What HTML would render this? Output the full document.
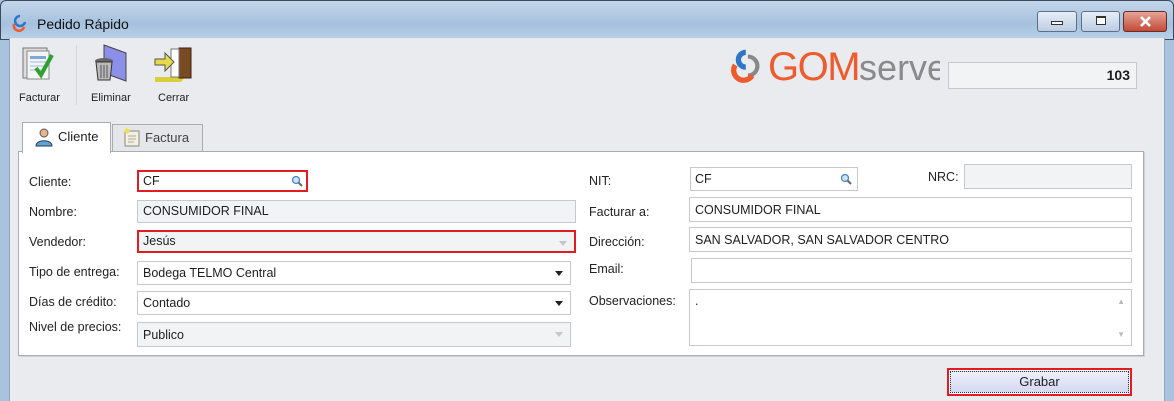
<!DOCTYPE html>
<html><head><meta charset="utf-8"><style>
*{box-sizing:border-box;margin:0;padding:0}
body{width:1174px;height:401px;overflow:hidden;font-family:"Liberation Sans",sans-serif;font-size:12px;color:#1e1e1e;background:#a9c3df;position:relative}
.a{position:absolute}
.title{left:0;top:0;width:1174px;height:40px;background:linear-gradient(#c3d6ea,#a6c1de 60%,#b9d0e8);border:1px solid #3b4a5c;border-radius:6px 6px 0 0}
.client{left:9px;top:38px;width:1156px;height:363px;background:#e9ebef;border-left:1px solid #8ea6c0;border-right:1px solid #8ea6c0}
.lbl{font-size:12.5px;color:#222}
.in{background:#fff;border:1px solid #c5c8cd;font-size:12.5px;padding:4px 5px;line-height:15px}
.ro{background:#f2f3f5}
.red{border:2px solid #e31b23}
.dd::after{content:"";position:absolute;right:7px;top:9px;border:4px solid transparent;border-top:5px solid #222}
.dd.g::after{border-top-color:#c4c6ca}
.wb{top:11px;height:21px;border:1px solid #5d6f86;border-radius:3px;background:linear-gradient(#e6eef8,#bccde2)}
.tb{font-size:11px;color:#222}
</style></head><body>
<div class="a title"></div>
<svg class="a" style="left:10px;top:13px" width="20" height="20" viewBox="0 0 20 20"><path d="M10 3a5 5 0 1 0 5 6" stroke="#2f75c5" stroke-width="2.5" fill="none"/><path d="M4 11a5 5 0 0 0 10 3" stroke="#ee5b2c" stroke-width="2.5" fill="none"/></svg>
<div class="a" style="left:37px;top:16px;font-size:14px;color:#111">Pedido Rápido</div>
<div class="a wb" style="left:1037px;width:40px"><div class="a" style="left:13px;top:9px;width:12px;height:4px;border:1px solid #333;background:#fff"></div></div>
<div class="a wb" style="left:1081px;width:39px"><div class="a" style="left:14px;top:4px;width:10px;height:9px;border:1px solid #333;border-top-width:2px;background:#fff"></div></div>
<div class="a wb" style="left:1123px;width:44px;background:linear-gradient(#e7a497,#c24a36);border-color:#6b2a22"><svg class="a" style="left:15px;top:4px" width="13" height="11" viewBox="0 0 13 11"><path d="M2 1l9 9M11 1l-9 9" stroke="#fff" stroke-width="2.6"/></svg></div>
<div class="a client"></div>
<!-- toolbar -->
<svg class="a" style="left:22px;top:46px" width="40" height="36" viewBox="0 0 40 36"><rect x="1" y="2" width="24" height="30" fill="#ddd" stroke="#777"/><rect x="5" y="5" width="22" height="28" fill="#f4f4f4" stroke="#888"/><rect x="8" y="10" width="16" height="3" fill="#7da7d8"/><path d="M8 16h16M8 20h16M8 24h16" stroke="#9bbbe0"/><path d="M14 22l5 7 11-20" stroke="#2ea02e" stroke-width="4" fill="none"/></svg>
<div class="a tb" style="left:19px;top:92px">Facturar</div>
<div class="a" style="left:76px;top:45px;width:1px;height:60px;background:#d4d7dc"></div>
<svg class="a" style="left:90px;top:43px" width="42" height="40" viewBox="0 0 42 40"><path d="M14 2l22 8v28l-22-8z" fill="#8b8fe8" stroke="#444"/><ellipse cx="14" cy="18" rx="9" ry="3" fill="#666"/><path d="M6 19l2 18h12l2-18z" fill="#bbb" stroke="#333"/><path d="M11 22v13M14 22v13M17 22v13" stroke="#555"/></svg>
<div class="a tb" style="left:91px;top:92px">Eliminar</div>
<svg class="a" style="left:153px;top:45px" width="42" height="38" viewBox="0 0 42 38"><path d="M2 32h30l-4 5H2z" fill="#d9cf3a"/><rect x="26" y="3" width="12" height="30" fill="#7a4a22" stroke="#3b220e"/><rect x="18" y="4" width="8" height="28" fill="#fff" stroke="#777"/><path d="M2 14h10v-6l9 9-9 9v-6H2z" fill="#e8d94a" stroke="#555"/></svg>
<div class="a tb" style="left:158px;top:92px">Cerrar</div>
<!-- logo -->
<svg class="a" style="left:731px;top:46px" width="38" height="38" viewBox="0 0 36 36"><path d="M14 6a7 7 0 0 0 0 14" stroke="#2f75c5" stroke-width="5" fill="none"/><path d="M16 10a9 9 0 1 1 0 18" stroke="#888" stroke-width="4" fill="none"/><path d="M4 18a9 9 0 0 0 16 10" stroke="#ee5b2c" stroke-width="5" fill="none"/></svg>
<div class="a" style="left:768px;top:42px;width:172px;overflow:hidden;white-space:nowrap;font-size:40px;letter-spacing:-1.5px;line-height:50px"><span style="color:#ee5b2c">GOM</span><span style="color:#8a8a8a;font-size:36px;letter-spacing:0">server</span></div>
<div class="a in ro" style="left:948px;top:62px;width:189px;height:27px;text-align:right;font-weight:bold;font-size:14px;padding:5px 6px">103</div>
<!-- tabs -->
<div class="a" style="left:18px;top:151px;width:1126px;height:205px;background:#fff;border:1px solid #a9acb1;box-shadow:1px 1px 0 #cfd2d6"></div>
<div class="a" style="left:22px;top:122px;width:89px;height:31px;background:#fff;border:1px solid #a9acb1;border-bottom:none"></div>
<svg class="a" style="left:35px;top:127px" width="18" height="20" viewBox="0 0 18 20"><circle cx="9" cy="6" r="4" fill="#e7b58a" stroke="#555"/><path d="M1 19c0-7 16-7 16 0z" fill="#5aa6d8" stroke="#335"/></svg>
<div class="a" style="left:58px;top:129px;font-size:13px">Cliente</div>
<div class="a" style="left:112px;top:124px;width:91px;height:27px;background:#e4e6ea;border:1px solid #a9acb1;border-bottom:none"></div>
<svg class="a" style="left:123px;top:128px" width="18" height="20" viewBox="0 0 18 20"><rect x="2" y="3" width="14" height="15" fill="#f4f0dc" stroke="#888"/><path d="M5 8h8M5 11h8M5 14h6" stroke="#aaa"/><circle cx="4" cy="3" r="2.5" fill="#f2e24a"/></svg>
<div class="a" style="left:145px;top:130px;font-size:13px;color:#444">Factura</div>
<!-- left fields -->
<div class="a lbl" style="left:29px;top:175px">Cliente:</div>
<div class="a in red" style="left:137px;top:170px;width:171px;height:22px;padding:2px 4px">CF<svg class="a" style="right:3px;top:3px" width="12" height="12" viewBox="0 0 12 12"><circle cx="5" cy="5" r="3.5" fill="#cfe3f7" stroke="#4b86c4" stroke-width="1.3"/><path d="M7.5 7.5l3.5 3.5" stroke="#666" stroke-width="2"/></svg></div>
<div class="a lbl" style="left:29px;top:205px">Nombre:</div>
<div class="a in ro" style="left:137px;top:200px;width:439px;height:23px;padding:3px 5px">CONSUMIDOR FINAL</div>
<div class="a lbl" style="left:29px;top:235px">Vendedor:</div>
<div class="a in ro red dd g" style="left:137px;top:230px;width:439px;height:23px;padding:2px 4px">Jesús</div>
<div class="a lbl" style="left:29px;top:265px">Tipo de entrega:</div>
<div class="a in dd" style="left:137px;top:261px;width:434px;height:24px">Bodega TELMO Central</div>
<div class="a lbl" style="left:29px;top:295px">Días de crédito:</div>
<div class="a in dd" style="left:137px;top:291px;width:434px;height:24px">Contado</div>
<div class="a lbl" style="left:29px;top:320px">Nivel de precios:</div>
<div class="a in ro dd g" style="left:137px;top:322px;width:434px;height:25px;padding:5px 5px">Publico</div>
<!-- right fields -->
<div class="a lbl" style="left:589px;top:174px">NIT:</div>
<div class="a in" style="left:690px;top:167px;width:168px;height:24px;padding:4px 4px">CF<svg class="a" style="right:5px;top:5px" width="12" height="12" viewBox="0 0 12 12"><circle cx="5" cy="5" r="3.5" fill="#cfe3f7" stroke="#4b86c4" stroke-width="1.3"/><path d="M7.5 7.5l3.5 3.5" stroke="#666" stroke-width="2"/></svg></div>
<div class="a lbl" style="left:928px;top:170px">NRC:</div>
<div class="a in ro" style="left:964px;top:164px;width:168px;height:25px"></div>
<div class="a lbl" style="left:589px;top:205px">Facturar a:</div>
<div class="a in" style="left:689px;top:197px;width:443px;height:25px;padding:5px 5px">CONSUMIDOR FINAL</div>
<div class="a lbl" style="left:589px;top:235px">Dirección:</div>
<div class="a in" style="left:689px;top:227px;width:443px;height:25px;padding:5px 5px">SAN SALVADOR, SAN SALVADOR CENTRO</div>
<div class="a lbl" style="left:589px;top:262px">Email:</div>
<div class="a in" style="left:691px;top:258px;width:441px;height:25px"></div>
<div class="a lbl" style="left:589px;top:294px">Observaciones:</div>
<div class="a in" style="left:689px;top:289px;width:443px;height:57px">.<span class="a" style="right:6px;top:4px;color:#bbb;font-size:8px">▲</span><span class="a" style="right:6px;bottom:3px;color:#bbb;font-size:8px">▼</span></div>
<!-- button -->
<div class="a" style="left:947px;top:368px;width:185px;height:28px;border:2px solid #e31b23;background:#fff;padding:1px"><div style="width:100%;height:100%;border:1px dotted #333;background:linear-gradient(#eef0fb,#d4d8f2);text-align:center;line-height:20px;font-size:13px">Grabar</div></div>
</body></html>
